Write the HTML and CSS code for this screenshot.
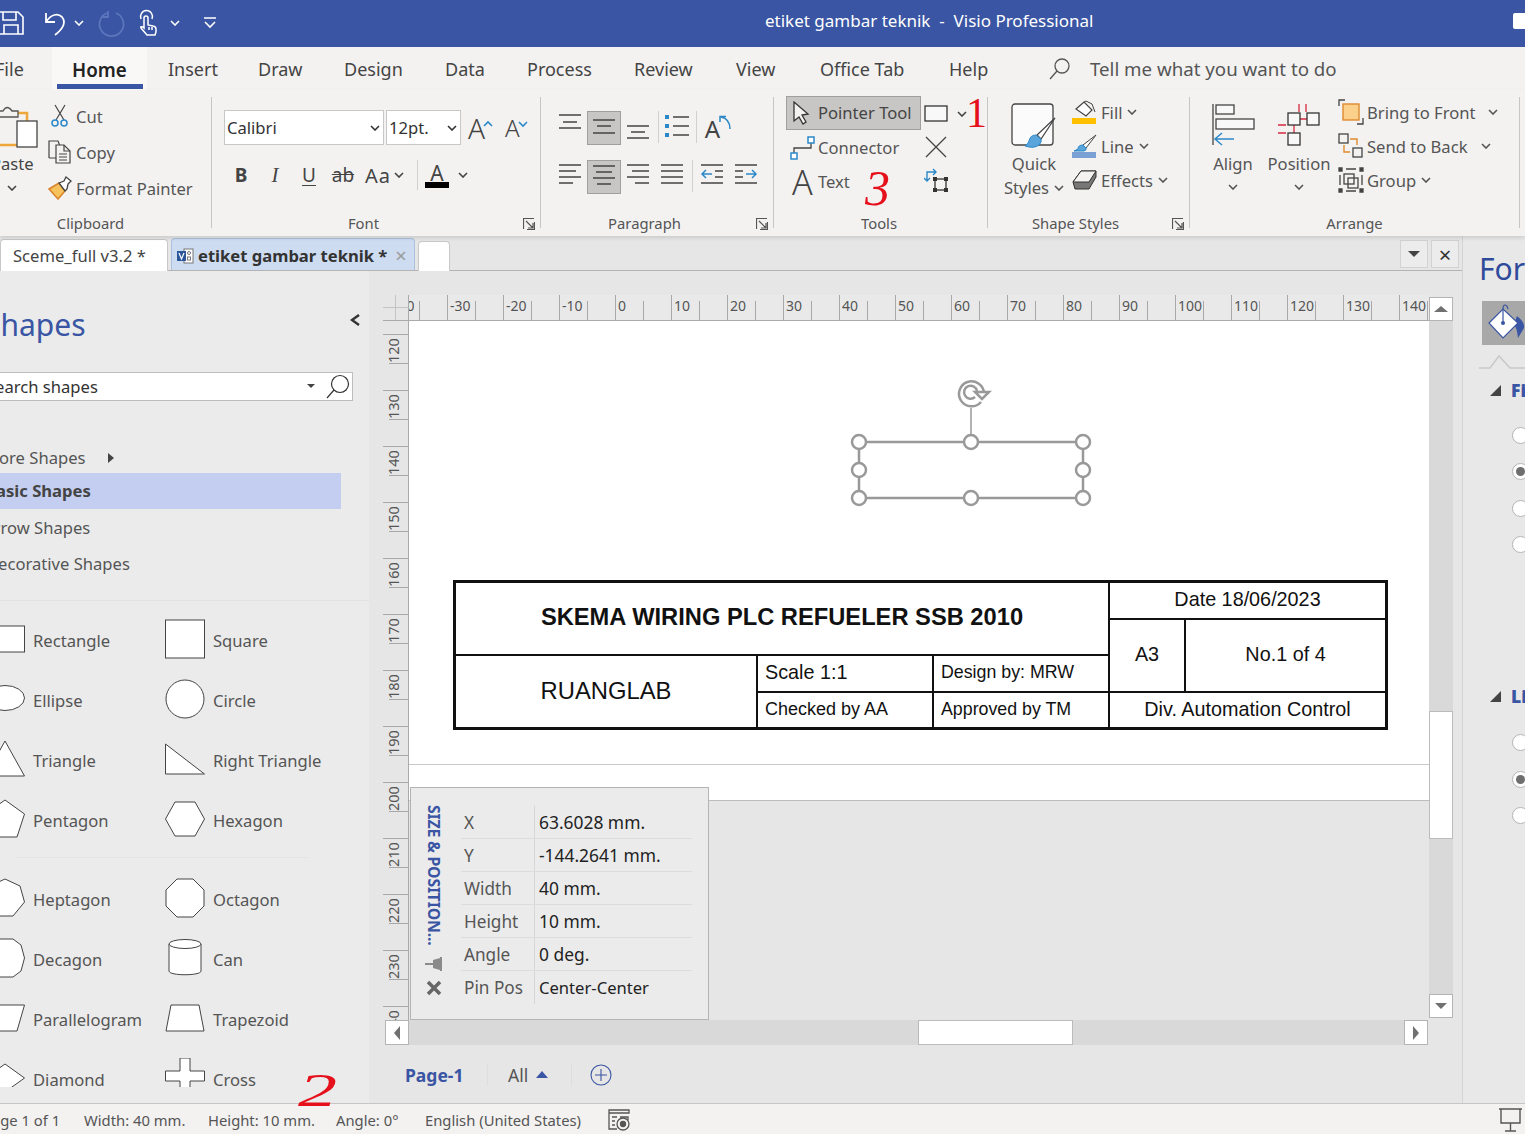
FILE: index.html
```html
<!DOCTYPE html>
<html lang="en">
<head>
  <meta charset="UTF-8">
  <title>etiket gambar teknik - Visio Professional</title>
  <link rel="stylesheet" href="styles.css">
</head>
<body>
<svg class="defs" width="0" height="0">
  <symbol id="chev" viewBox="0 0 10 6"><path d="M1 1l4 4 4-4" fill="none" stroke="currentColor" stroke-width="1.6"/></symbol>
  <symbol id="launch" viewBox="0 0 12 12"><path d="M.5 11V.5H11M3 3l7 7M10 5v5H5M11.5 4v7.5H4" fill="none" stroke="#555" stroke-width="1.2"/></symbol>
</svg>

<div class="app">
  <!-- title bar -->
  <header class="titlebar">
    <div class="qat">
      <svg class="q-save" width="24" height="24" viewBox="0 0 24 24" fill="none" stroke="#fff" stroke-width="1.6"><path d="M-6 1H18l5 5v17H-6zM3 1v8h13V1M4 23v-9h14v9"/></svg>
      <svg class="q-undo" width="24" height="26" viewBox="0 0 24 26" fill="none" stroke="#fff" stroke-width="1.8"><path d="M2 3v9h9M2 12C7 4 14 3 18 7c4 5 2 11-7 18"/></svg>
      <svg class="q-chev" width="10" height="6"><use href="#chev"/></svg>
      <svg class="q-redo" width="26" height="26" viewBox="0 0 26 26" fill="none" stroke="#5b76bd" stroke-width="1.8"><path d="M8 3a12 12 0 1 0 9 0M9 1v6H3"/></svg>
      <svg class="q-touch" width="20" height="26" viewBox="0 0 20 26" fill="none" stroke="#fff" stroke-width="1.5"><path d="M2 9a6 6 0 1 1 11 0M5 8a2 2 0 0 1 4 0v7l5 1q3 .5 3 3v3l-1 3H8l-6-7q-1-2 2-1l1 1zM10 17v3M13 17v3"/></svg>
      <svg class="q-chev2" width="10" height="6"><use href="#chev"/></svg>
      <svg class="q-more" width="14" height="12" viewBox="0 0 14 12" fill="none" stroke="#fff" stroke-width="1.6"><path d="M1 1h12M2 5l5 5 5-5"/></svg>
    </div>
    <div class="doc-title">etiket gambar teknik  -  Visio Professional</div>
    <div class="title-end"></div>
  </header>

  <!-- ribbon tabs -->
  <nav class="tabs">
    <span class="tab tab-file">File</span>
    <span class="tab tab-home">Home</span>
    <span class="tab tab-insert">Insert</span>
    <span class="tab tab-draw">Draw</span>
    <span class="tab tab-design">Design</span>
    <span class="tab tab-data">Data</span>
    <span class="tab tab-process">Process</span>
    <span class="tab tab-review">Review</span>
    <span class="tab tab-view">View</span>
    <span class="tab tab-office">Office Tab</span>
    <span class="tab tab-help">Help</span>
    <svg class="tell-icon" width="22" height="24" viewBox="0 0 22 24" fill="none" stroke="#555" stroke-width="1.3"><circle cx="13" cy="9" r="7"/><path d="M8 14L1 22"/></svg>
    <span class="tell">Tell me what you want to do</span>
  </nav>

  <!-- ribbon -->
  <section class="ribbon">
    <div class="group g-clip">
      <div class="body clip-body">
        <div class="paste">
          <svg class="paste-ic" width="38" height="46" viewBox="0 0 38 46"><rect x="-6" y="10" width="33" height="32" fill="#f3f2f1" stroke="#eda73a" stroke-width="2.5"/><path d="M-2 14V8h5q4-7 9 0h6v6z" fill="#f3f2f1" stroke="#555" stroke-width="1.3"/><rect x="17" y="18" width="20" height="26" fill="#fff" stroke="#444" stroke-width="1.3"/></svg>
          <span class="paste-txt">Paste</span>
          <svg class="paste-chev" width="10" height="6"><use href="#chev"/></svg>
        </div>
        <div class="stack">
          <div class="small"><svg class="sic" width="24" height="24" viewBox="0 0 24 24" fill="none"><path d="M7 1l9 15M17 1L8 16" stroke="#444" stroke-width="1.2"/><circle cx="7" cy="19" r="3" stroke="#2b88c8" stroke-width="1.5"/><circle cx="16" cy="19" r="3" stroke="#2b88c8" stroke-width="1.5"/></svg>Cut</div>
          <div class="small"><svg class="sic" width="24" height="24" viewBox="0 0 24 24" fill="#f3f2f1" stroke="#444" stroke-width="1.2"><path d="M1 18V1h9l2 5M1 18h8"/><path d="M8 5h8l6 6v12H8z"/><path d="M16 5v6h6M11 14h8M11 17h8M11 20h8" fill="none"/></svg>Copy</div>
          <div class="small"><svg class="sic" width="24" height="24" viewBox="0 0 24 24"><path d="M1 13l10-6 6 8-7 8z" fill="#f6c25b" stroke="#d9822b" stroke-width="1.5"/><path d="M11 7l5-2 2-4 5 4-3 3-1 5-2 2z" fill="#fff" stroke="#444" stroke-width="1.3"/></svg>Format Painter</div>
        </div>
      </div>
      <div class="label">Clipboard</div>
    </div>
    <div class="sep"></div>

    <div class="group g-font">
      <div class="body font-body">
        <div class="font-row">
          <div class="combo combo-font">Calibri<svg width="10" height="6"><use href="#chev"/></svg></div>
          <div class="combo combo-size">12pt.<svg width="10" height="6"><use href="#chev"/></svg></div>
          <span class="grow">A<svg width="10" height="8" viewBox="0 0 10 8" fill="none" stroke="#2b88c8" stroke-width="1.6"><path d="M1 6l4-4 4 4"/></svg></span>
          <span class="grow shrink">A<svg width="10" height="8" viewBox="0 0 10 8" fill="none" stroke="#2b88c8" stroke-width="1.6"><path d="M1 2l4 4 4-4"/></svg></span>
        </div>
        <div class="font-row2">
          <span class="fb bold">B</span>
          <span class="fb ital">I</span>
          <span class="fb under">U</span>
          <span class="fb strike">ab</span>
          <span class="fb case">Aa<svg width="10" height="6"><use href="#chev"/></svg></span>
          <span class="vsep vsep-font"></span>
          <span class="color-a">A</span>
          <svg class="color-chev" width="10" height="6"><use href="#chev"/></svg>
        </div>
      </div>
      <div class="label">Font</div>
      <svg class="launcher" width="12" height="12"><use href="#launch"/></svg>
    </div>
    <div class="sep"></div>

    <div class="group g-para">
      <div class="body para-body">
        <div class="para-row">
          <span class="pb"><svg width="34" height="32" viewBox="0 0 34 32" class="lines"><path d="M6 4h22M10 11h14M6 17h22"/></svg></span>
          <span class="pb on"><svg width="32" height="32" viewBox="0 0 32 32" class="lines"><path d="M5 8h22M9 14h14M5 21h22"/></svg></span>
          <span class="pb"><svg width="34" height="32" viewBox="0 0 34 32" class="lines"><path d="M6 15h22M10 21h14M6 27h22"/></svg></span>
          <span class="vsep vsep-a"></span>
          <span class="pb"><svg width="34" height="32" viewBox="0 0 34 32" class="lines"><path d="M6 4h4v4H6zM6 13h4v4H6zM6 22h4v4H6z" fill="#2b88c8" stroke="none"/><path d="M14 6h16M14 15h16M14 24h16"/></svg></span>
          <span class="vsep vsep-b"></span>
          <span class="pb pb-dir">A<svg width="13" height="15" viewBox="0 0 13 15" fill="none" stroke="#2b88c8" stroke-width="1.5"><path d="M12 14C12 7 8 3 3 2M2 7V1.5h6"/></svg></span>
        </div>
        <div class="para-row para-row2">
          <span class="pb"><svg width="34" height="32" viewBox="0 0 34 32" class="lines"><path d="M6 5h22M6 11h17M6 17h22M6 23h14"/></svg></span>
          <span class="pb on"><svg width="32" height="32" viewBox="0 0 32 32" class="lines"><path d="M5 5h22M8 11h16M5 17h22M9 23h14"/></svg></span>
          <span class="pb"><svg width="34" height="32" viewBox="0 0 34 32" class="lines"><path d="M6 5h22M11 11h17M6 17h22M14 23h14"/></svg></span>
          <span class="pb"><svg width="34" height="32" viewBox="0 0 34 32" class="lines"><path d="M6 5h22M6 11h22M6 17h22M6 23h22"/></svg></span>
          <span class="vsep vsep-c"></span>
          <span class="pb"><svg width="34" height="32" viewBox="0 0 34 32" class="lines"><path d="M6 5h22M20 11h8M20 17h8M6 23h22"/><path d="M17 14H7M11 10l-4 4 4 4" stroke="#2b88c8"/></svg></span>
          <span class="pb"><svg width="34" height="32" viewBox="0 0 34 32" class="lines"><path d="M6 5h22M6 11h8M6 17h8M6 23h22"/><path d="M17 14h10M23 10l4 4-4 4" stroke="#2b88c8"/></svg></span>
        </div>
      </div>
      <div class="label">Paragraph</div>
      <svg class="launcher" width="12" height="12"><use href="#launch"/></svg>
    </div>
    <div class="sep"></div>

    <div class="group g-tools">
      <div class="body tools-body">
        <div class="tools-col">
          <div class="tool tool-on"><svg width="17" height="24" viewBox="0 0 17 24"><path d="M1 1v19l5-4 4 7 3-2-4-7 6-1z" fill="#f3f2f1" stroke="#333" stroke-width="1.3"/></svg>Pointer Tool</div>
          <div class="tool tool-conn"><svg width="26" height="24" viewBox="0 0 26 24" fill="none"><path d="M4 17v-5h17V6" stroke="#444" stroke-width="1.3"/><rect x="1" y="17" width="6" height="6" fill="#fff" stroke="#2b88c8" stroke-width="1.5"/><rect x="18" y="1" width="6" height="6" fill="#fff" stroke="#2b88c8" stroke-width="1.5"/></svg>Connector</div>
          <div class="tool tool-text"><span class="big-a">A</span>Text</div>
        </div>
        <div class="tools-col2">
          <div class="tic"><svg width="24" height="18" viewBox="0 0 24 18"><rect x="1" y="1" width="22" height="15" fill="#f8f8f8" stroke="#333" stroke-width="1.3"/></svg><svg class="tic-chev" width="10" height="6"><use href="#chev"/></svg></div>
          <div class="tic tic-x"><svg width="24" height="22" viewBox="0 0 24 22" fill="none" stroke="#444" stroke-width="1.3"><path d="M2 1l20 20M22 1L2 21"/></svg></div>
          <div class="tic tic-crop"><svg width="24" height="24" viewBox="0 0 24 24" fill="none"><rect x="11" y="11" width="11" height="11" stroke="#333" stroke-width="1.3"/><path d="M9 9h4v4H9zM20 9h4v4h-4zM9 20h4v4H9zM20 20h4v4h-4z" fill="#333"/><path d="M3 13V4h9M9 1l3 3-3 3M0 10l3 3 3-3" stroke="#2b88c8" stroke-width="1.4"/></svg></div>
        </div>
      </div>
      <div class="label">Tools</div>
    </div>
    <div class="sep"></div>

    <div class="group g-styles">
      <div class="body styles-body">
        <div class="big big-quick">
          <svg width="46" height="46" viewBox="0 0 46 46"><rect x="1" y="1" width="41" height="41" rx="3" fill="#fbfbfb" stroke="#444" stroke-width="1.3"/><path d="M44 15L26 32l4 4z" fill="#fff" stroke="#444" stroke-width="1.2"/><path d="M25 32q-6 0-7 6-1 3-4 5 9 3 14-1 3-3 2-6z" fill="#5aa5dc" stroke="#2b88c8"/></svg>
          <span class="big-txt">Quick</span>
          <span class="big-txt quick-2">Styles<svg width="10" height="6"><use href="#chev"/></svg></span>
        </div>
        <div class="stack stack-mid">
          <div class="small mid"><svg class="sic" width="26" height="24" viewBox="0 0 26 24"><path d="M4 9l8-7 8 8-6 6z" fill="#fff" stroke="#444" stroke-width="1.2"/><path d="M12 2l2-1 6 3 3 8" fill="none" stroke="#444"/><rect y="18" width="24" height="6" fill="#ffc000"/></svg>Fill<svg class="ch" width="10" height="6"><use href="#chev"/></svg></div>
          <div class="small mid"><svg class="sic" width="26" height="24" viewBox="0 0 26 24"><path d="M24 1L11 11l3 3z" fill="#fff" stroke="#444"/><path d="M11 11q-5 0-5 4l-4 2h10q3-1 2-3z" fill="#5aa5dc" stroke="#2b88c8"/><rect y="18" width="24" height="6" fill="#7ba1d4"/></svg>Line<svg class="ch" width="10" height="6"><use href="#chev"/></svg></div>
          <div class="small mid"><svg class="sic" width="26" height="22" viewBox="0 0 26 22"><path d="M1 13L9 2h15v6l-7 12H3z" fill="#777" stroke="#333"/><path d="M1 13L9 2h15l-7 11z" fill="#f3f2f1" stroke="#333"/></svg>Effects<svg class="ch" width="10" height="6"><use href="#chev"/></svg></div>
        </div>
      </div>
      <div class="label">Shape Styles</div>
      <svg class="launcher" width="12" height="12"><use href="#launch"/></svg>
    </div>
    <div class="sep"></div>

    <div class="group g-arrange">
      <div class="body arrange-body">
        <div class="big big-align">
          <svg width="44" height="44" viewBox="0 0 44 44" fill="none" stroke="#444" stroke-width="1.3"><path d="M2 1v41"/><rect x="5" y="2" width="18" height="9" fill="#f8f8f8"/><rect x="5" y="16" width="38" height="10" fill="#f8f8f8"/><path d="M23 36H4M11 30l-7 6 7 6" stroke="#2b88c8" stroke-width="1.5"/></svg>
          <span class="big-txt">Align</span>
          <svg class="big-chev" width="10" height="6"><use href="#chev"/></svg>
        </div>
        <div class="big big-pos">
          <svg width="44" height="44" viewBox="0 0 44 44" fill="none" stroke="#d8293f" stroke-width="1.3"><path d="M22 1v8M29 1v8M1 22h8M1 30h8M23 16h8M17 22v9"/><g stroke="#333"><rect x="11" y="10" width="12" height="12" fill="#f8f8f8"/><rect x="30" y="10" width="12" height="12" fill="#f8f8f8"/><rect x="11" y="30" width="12" height="12" fill="#f8f8f8"/></g></svg>
          <span class="big-txt">Position</span>
          <svg class="big-chev" width="10" height="6"><use href="#chev"/></svg>
        </div>
        <div class="stack stack-arr">
          <div class="small arr"><svg class="sic" width="26" height="26" viewBox="0 0 26 26" fill="none"><path d="M7 1H1v6M19 25h6v-6" stroke="#444" stroke-width="1.3"/><rect x="5" y="5" width="16" height="16" fill="#fad08a" stroke="#e08a2e" stroke-width="1.4"/></svg>Bring to Front<svg class="ch ch-front" width="10" height="6"><use href="#chev"/></svg></div>
          <div class="small arr"><svg class="sic" width="26" height="26" viewBox="0 0 26 26" fill="none"><path d="M12 6h7v6M6 12v7h6" stroke="#e08a2e" stroke-width="1.4"/><rect x="1" y="1" width="9" height="9" stroke="#444" stroke-width="1.3"/><rect x="15" y="15" width="9" height="9" stroke="#444" stroke-width="1.3"/></svg>Send to Back<svg class="ch ch-front" width="10" height="6"><use href="#chev"/></svg></div>
          <div class="small arr"><svg class="sic" width="26" height="26" viewBox="0 0 26 26" fill="none" stroke="#444" stroke-width="1.3"><path d="M1 1h3v3H1zM22 1h3v3h-3zM1 22h3v3H1zM22 22h3v3h-3z" fill="#444"/><path d="M8 2h10M8 24h10M2 8v10M24 8v10"/><rect x="6" y="7" width="10" height="10"/><rect x="10" y="11" width="10" height="10"/></svg>Group<svg class="ch" width="10" height="6"><use href="#chev"/></svg></div>
        </div>
      </div>
      <div class="label">Arrange</div>
    </div>
    <div class="sep"></div>
  </section>

  <!-- workspace -->
  <div class="workspace">
    <div class="work-main">
      <div class="docstrip">
        <div class="doctab doctab-a">Sceme_full v3.2 *</div>
        <div class="doctab doctab-b">
          <svg width="17" height="16" viewBox="0 0 17 16"><rect x="7" y="1" width="9" height="14" fill="#fff" stroke="#777"/><rect x="0" y="3" width="9" height="10" fill="#2b579a"/><path d="M2 5l2.5 6L7 5" fill="none" stroke="#fff" stroke-width="1.2"/><circle cx="12" cy="5" r="1.5" fill="none" stroke="#777"/><rect x="10.5" y="9" width="3" height="3" fill="none" stroke="#777"/></svg>
          <b>etiket gambar teknik *</b><span class="doc-x">×</span>
        </div>
        <div class="doctab doctab-c"></div>
        <div class="strip-btns">
          <span class="strip-btn"><i class="caret-d"></i></span>
          <span class="strip-btn strip-x">×</span>
        </div>
      </div>

      <div class="work-row">
        <!-- shapes panel -->
        <aside class="shapes">
          <div class="shapes-head">
            <h2 class="shapes-title">Shapes</h2>
            <svg class="collapse" width="11" height="12" viewBox="0 0 11 12" fill="none" stroke="#333" stroke-width="2.5"><path d="M9 1L2 6l7 5"/></svg>
          </div>
          <div class="search">
            <span class="search-txt">Search shapes</span>
            <i class="caret-d caret-s"></i>
            <svg width="26" height="26" viewBox="0 0 26 26" fill="none" stroke="#333" stroke-width="1.2"><circle cx="15" cy="10" r="8.5"/><path d="M9 16l-7 8"/></svg>
          </div>
          <ul class="cats">
            <li class="cat cat-more"><span>More Shapes</span><i class="caret-r"></i></li>
            <li class="cat cat-basic"><span>Basic Shapes</span></li>
            <li class="cat cat-arrow"><span>Arrow Shapes</span></li>
            <li class="cat cat-deco"><span>Decorative Shapes</span></li>
          </ul>
          <div class="rule"></div>
          <div class="stencil">
            <div class="sh"><svg viewBox="0 0 40 40"><rect x=".5" y="7" width="39" height="26"/></svg>Rectangle</div>
            <div class="sh"><svg viewBox="0 0 40 40"><rect x=".5" y="1" width="39" height="38"/></svg>Square</div>
            <div class="sh"><svg viewBox="0 0 40 40"><ellipse cx="20" cy="19" rx="19.5" ry="12.5"/></svg>Ellipse</div>
            <div class="sh"><svg viewBox="0 0 40 40"><circle cx="20" cy="20" r="19"/></svg>Circle</div>
            <div class="sh"><svg viewBox="0 0 40 40"><path d="M20 2l19.5 35H.5z"/></svg>Triangle</div>
            <div class="sh"><svg viewBox="0 0 40 40"><path d="M.5 5l39 30H.5z"/></svg>Right Triangle</div>
            <div class="sh"><svg viewBox="0 0 40 40"><path d="M20 1l19.5 14L32 38H8L.5 15z"/></svg>Pentagon</div>
            <div class="sh"><svg viewBox="0 0 40 40"><path d="M10 3h20l9.5 17L30 37H10L.5 20z"/></svg>Hexagon</div>
            <div class="sh-rule"></div>
            <div class="sh"><svg viewBox="0 0 40 40"><path d="M20 1l15 7 4.5 16L28 38H12L.5 24 5 8z"/></svg>Heptagon</div>
            <div class="sh"><svg viewBox="0 0 40 40"><path d="M12 1h16l11 11v16L28 39H12L1 28V12z"/></svg>Octagon</div>
            <div class="sh"><svg viewBox="0 0 40 40"><path d="M12 1h16l8 6 3.5 13L36 33l-8 6H12l-8-6L.5 20 4 7z"/></svg>Decagon</div>
            <div class="sh"><svg viewBox="0 0 40 40"><path d="M4 6v27c0 5 32 5 32 0V6"/><ellipse cx="20" cy="6" rx="16" ry="4.5"/></svg>Can</div>
            <div class="sh"><svg viewBox="0 0 40 40"><path d="M8 7h31.5L32 33H.5z"/></svg>Parallelogram</div>
            <div class="sh"><svg viewBox="0 0 40 40"><path d="M6 7h28l5 26H1z"/></svg>Trapezoid</div>
            <div class="sh"><svg viewBox="0 0 40 40"><path d="M20 6l19.5 14L20 34 .5 20z"/></svg>Diamond</div>
            <div class="sh"><svg viewBox="0 0 40 40"><path d="M15 0h10v13h14.5v10H25v17H15V23H.5V13H15z"/></svg>Cross</div>
          </div>
        </aside>

        <!-- drawing area -->
        <main class="stage">
          <div class="corner"></div>
          <div class="hruler">
            <span class="ht">-40</span><span class="ht">-30</span><span class="ht">-20</span><span class="ht">-10</span><span class="ht">0</span><span class="ht">10</span><span class="ht">20</span><span class="ht">30</span><span class="ht">40</span><span class="ht">50</span><span class="ht">60</span><span class="ht">70</span><span class="ht">80</span><span class="ht">90</span><span class="ht">100</span><span class="ht">110</span><span class="ht">120</span><span class="ht">130</span><span class="ht">140</span>
          </div>
          <div class="vscroll">
            <span class="sbtn"><i class="caret-u"></i></span>
            <div class="vtrack"><div class="vthumb"></div></div>
            <span class="sbtn"><i class="caret-d caret-g"></i></span>
          </div>
          <div class="vruler">
            <span class="vt"><b>120</b></span><span class="vt"><b>130</b></span><span class="vt"><b>140</b></span><span class="vt"><b>150</b></span><span class="vt"><b>160</b></span><span class="vt"><b>170</b></span><span class="vt"><b>180</b></span><span class="vt"><b>190</b></span><span class="vt"><b>200</b></span><span class="vt"><b>210</b></span><span class="vt"><b>220</b></span><span class="vt"><b>230</b></span><span class="vt"><b>240</b></span>
          </div>
          <div class="canvas">
            <div class="sheet"></div>

            <svg class="selection" width="250" height="140" viewBox="0 0 250 140" fill="#fff" stroke="#999" stroke-width="2.5">
              <rect x="15" y="67" width="224" height="56" fill="none"/>
              <path d="M127 33v30" stroke-width="1.5" fill="none"/>
              <path d="M137 27a12.5 12.5 0 1 1 3-9M131 22a6.5 6.5 0 1 1 2-6" fill="none"/>
              <path d="M131 17h14l-7 7z" fill="#fff"/>
              <circle cx="15" cy="67" r="7"/><circle cx="127" cy="67" r="7"/><circle cx="239" cy="67" r="7"/>
              <circle cx="15" cy="95" r="7"/><circle cx="239" cy="95" r="7"/>
              <circle cx="15" cy="123" r="7"/><circle cx="127" cy="123" r="7"/><circle cx="239" cy="123" r="7"/>
            </svg>

            <div class="titleblock">
              <div class="tb tb-title">SKEMA WIRING PLC REFUELER SSB 2010</div>
              <div class="tb tb-date">Date 18/06/2023</div>
              <div class="tb tb-a3">A3</div>
              <div class="tb tb-no">No.1 of 4</div>
              <div class="tb tb-lab">RUANGLAB</div>
              <div class="tb tb-scale">Scale 1:1</div>
              <div class="tb tb-design">Design by: MRW</div>
              <div class="tb tb-check">Checked by AA</div>
              <div class="tb tb-appr">Approved by TM</div>
              <div class="tb tb-div">Div. Automation Control</div>
            </div>

            <div class="sizepos">
              <div class="sp-side">
                <span class="sp-title">SIZE &amp; POSITION...</span>
                <svg width="18" height="14" viewBox="0 0 18 14" fill="#8a8a8a"><path d="M0 6h8v2H0zM8 3l7-2v12l-7-2zM15 0h2v14h-2z"/></svg>
                <svg width="16" height="16" viewBox="0 0 16 16" stroke="#666" stroke-width="3.5"><path d="M2 2l12 12M14 2L2 14"/></svg>
              </div>
              <div class="sp-table">
                <div class="sp-row"><span>X</span><em>63.6028 mm.</em></div>
                <div class="sp-row"><span>Y</span><em>-144.2641 mm.</em></div>
                <div class="sp-row"><span>Width</span><em>40 mm.</em></div>
                <div class="sp-row"><span>Height</span><em>10 mm.</em></div>
                <div class="sp-row"><span>Angle</span><em>0 deg.</em></div>
                <div class="sp-row"><span>Pin Pos</span><em>Center-Center</em></div>
              </div>
            </div>
          </div>
          <div class="hscroll">
            <span class="sbtn"><i class="caret-l"></i></span>
            <div class="htrack"><div class="hthumb"></div></div>
            <span class="sbtn"><i class="caret-r caret-g"></i></span>
          </div>
          <div class="pagebar">
            <span class="page-name">Page-1</span>
            <span class="page-sep"></span>
            <span class="page-all">All</span><i class="caret-blue"></i>
            <span class="page-sep page-sep2"></span>
            <svg width="22" height="22" viewBox="0 0 22 22" fill="none" stroke="#3955a3" stroke-width="1.1"><circle cx="11" cy="11" r="10"/><path d="M11 5v12M5 11h12"/></svg>
          </div>
        </main>
      </div>
    </div>

    <!-- format shape pane -->
    <aside class="format">
      <div class="format-title">Format Shape</div>
      <div class="format-icon"><svg width="44" height="44" viewBox="0 0 44 44"><path d="M35 15q8 6 7 12l-6 10q-1-10-4-14z" fill="#3955a3"/><path d="M7 22L21 8l15 14-15 15z" fill="#fff" stroke="#3955a3" stroke-width="1.2"/><path d="M21 21V8q0-4 2-4t3 4" fill="none" stroke="#3955a3" stroke-width="1.2"/><circle cx="21" cy="22" r="2" fill="#3955a3"/></svg></div>
      <svg class="format-notch" width="46" height="14" viewBox="0 0 46 14" fill="none" stroke="#c8c8c8" stroke-width="1.5"><path d="M0 13h11l9-12 11 12h15"/></svg>
      <div class="sect sect-fill"><i class="tri"></i><b>Fill</b></div>
      <div class="radios radios-fill">
        <span class="radio"></span><span class="radio radio-on"></span><span class="radio"></span><span class="radio"></span>
      </div>
      <div class="sect sect-line"><i class="tri"></i><b>Line</b></div>
      <div class="radios radios-line">
        <span class="radio"></span><span class="radio radio-on"></span><span class="radio"></span>
      </div>
    </aside>
  </div>

  <!-- status bar -->
  <footer class="status">
    <span class="st st-page">Page 1 of 1</span>
    <span class="st st-w">Width: 40 mm.</span>
    <span class="st st-h">Height: 10 mm.</span>
    <span class="st st-a">Angle: 0°</span>
    <span class="st st-l">English (United States)</span>
    <svg width="22" height="22" viewBox="0 0 22 22" fill="none" stroke="#555" stroke-width="1.3"><path d="M1 1h20v3H1zM1 4v16h8M4 8h5M4 12h3M4 16h3M12 8h8v3"/><circle cx="15" cy="15" r="6"/><circle cx="15" cy="15" r="2.5" fill="#555"/></svg>
    <svg class="st-present" width="24" height="24" viewBox="0 0 24 24" fill="none" stroke="#555" stroke-width="1.4"><path d="M0 1h23M2 1v14h19V1M11.5 15v8M6 23h11"/></svg>
  </footer>

  <!-- red pen marks on top of the screenshot -->
  <span class="ink ink-1">1</span>
  <span class="ink ink-2">2</span>
  <span class="ink ink-3">3</span>
</div>
</body>
</html>
```

FILE: styles.css
```css
* {
  box-sizing: border-box;
}

html, body {
  margin: 0;
  padding: 0;
}

body {
  font-family: "Noto Sans", "Open Sans", sans-serif;
  font-size: 16.6px;
  color: #444;
  background: #e6e6e6;
  overflow: hidden;
}

.defs {
  position: absolute;
}

.app {
  position: relative;
  width: 1525px;
  height: 1134px;
  overflow: hidden;
  display: flex;
  flex-direction: column;
}

/* title bar */
.titlebar {
  height: 47px;
  background: #3955a3;
  display: flex;
  align-items: center;
  color: #fff;
  flex: none;
}

.qat {
  display: flex;
  align-items: center;
  width: 765px;
  flex: none;
  margin-top: -2px;
}

.qat svg {
  overflow: visible;
  flex: none;
}

.q-undo { margin-left: 20px; }
.q-chev { margin-left: 6px; }
.q-redo { margin-left: 15px; }
.q-touch { margin-left: 14px; }
.q-chev2 { margin-left: 11px; }
.q-more { margin-left: 23px; }

.doc-title {
  white-space: pre;
  font-size: 17px;
  margin-top: -7px;
}

.title-end {
  margin-left: auto;
  width: 12px;
  height: 16px;
  background: #fff;
  border-radius: 2px 0 0 2px;
  margin-top: -6px;
}

/* tabs */
.tabs {
  height: 43px;
  background: #f3f2f1;
  display: flex;
  align-items: center;
  flex: none;
  color: #444;
  white-space: nowrap;
  font-size: 18px;
}

.tab {
  display: block;
}

.tab-file { margin-left: -5px; width: 57px; }
.tab-home {
  width: 95px;
  margin-right: 21px;
  padding-left: 20px;
  font-weight: 600;
  font-size: 18.8px;
  color: #222;
  position: relative;
  height: 43px;
  line-height: 47px;
  background: #f9f8f7;
}
.tab-home::after {
  content: "";
  position: absolute;
  left: 5px;
  right: 4px;
  bottom: 1px;
  height: 5px;
  background: #3955a3;
}
.tab-insert { width: 90px; }
.tab-draw { width: 86px; }
.tab-design { width: 101px; }
.tab-data { width: 82px; }
.tab-process { width: 107px; }
.tab-review { width: 102px; }
.tab-view { width: 84px; }
.tab-office { width: 129px; }
.tab-help { width: 100px; }

.tell-icon { flex: none; }

.tell {
  margin-left: 19px;
  font-size: 18.7px;
  color: #555;
}

/* ribbon */
.ribbon {
  height: 146px;
  background: #f3f2f1;
  display: flex;
  flex: none;
  box-shadow: 0 2px 4px rgba(0, 0, 0, .12);
  position: relative;
  z-index: 2;
  white-space: nowrap;
}

.group {
  position: relative;
  display: flex;
  flex-direction: column;
  flex: none;
  padding-top: 7px;
}

.g-clip { width: 211px; }
.g-font { width: 328px; }
.g-para { width: 232px; }
.g-tools { width: 213px; }
.g-styles { width: 201px; }
.g-arrange { width: 329px; }

.sep {
  width: 1px;
  margin: 7px 0 8px;
  background: #c8c6c4;
  flex: none;
}

.body {
  height: 115px;
  display: flex;
}

.label {
  height: 24px;
  line-height: 22px;
  text-align: center;
  font-size: 14.8px;
  color: #555;
}

.g-clip .label { padding-right: 30px; }
.g-font .label { padding-right: 25px; }
.g-para .label { padding-right: 25px; }
.g-tools .label { padding-right: 3px; }
.g-styles .label { padding-right: 26px; }

.launcher {
  position: absolute;
  right: 5px;
  bottom: 6px;
}

.stack {
  display: flex;
  flex-direction: column;
}

.small {
  height: 36px;
  display: flex;
  align-items: center;
  color: #555;
}

.sic {
  flex: none;
  margin-right: 4px;
}

.ch {
  margin-left: 5px;
}

/* clipboard */
.paste {
  width: 48px;
  display: flex;
  flex-direction: column;
  flex: none;
}

.paste-ic {
  margin-top: 6px;
  overflow: hidden;
}

.paste-txt {
  margin-left: -9px;
  margin-top: 3px;
  line-height: 24px;
  color: #444;
}

.paste-chev {
  margin: 9px 0 0 7px;
}

.clip-body .stack {
  margin-top: 1px;
}

/* font */
.font-body {
  flex-direction: column;
  padding: 13px 0 0 12px;
}

.font-row {
  display: flex;
  gap: 2px;
  align-items: center;
}

.combo {
  height: 35px;
  background: #fff;
  border: 1px solid #c8c8c8;
  display: flex;
  align-items: center;
  justify-content: space-between;
  padding: 0 3px 0 2px;
  color: #333;
}

.combo-font { width: 160px; }
.combo-size { width: 75px; }

.grow {
  display: flex;
  align-items: flex-start;
  font-size: 28px;
  font-weight: 300;
  line-height: 30px;
  width: 37px;
  padding-left: 5px;
  color: #444;
}

.grow svg {
  margin: 7px 0 0 -2px;
}

.shrink {
  font-size: 24px;
  padding-left: 3px;
}

.font-row2 {
  display: flex;
  align-items: center;
  height: 32px;
  margin-top: 14px;
}

.fb {
  width: 34px;
  text-align: center;
  color: #444;
  font-size: 19px;
  flex: none;
}

.bold { font-weight: 700; }
.ital { font-family: "Liberation Serif", serif; font-style: italic; font-size: 21px; }
.under { text-decoration: underline; text-underline-offset: 3px; }
.strike { text-decoration: line-through; }

.case {
  display: flex;
  align-items: center;
  justify-content: flex-start;
  width: 48px;
  padding-left: 5px;
  letter-spacing: 1px;
  font-size: 20px;
}

.case svg {
  margin-left: 3px;
}

.vsep {
  width: 1px;
  background: #d2d0ce;
  flex: none;
}

.vsep-font {
  height: 30px;
  margin: 0 7px 0 9px;
}

.color-a {
  width: 24px;
  height: 26px;
  line-height: 22px;
  text-align: center;
  font-size: 21px;
  border-bottom: 6px solid #000;
  color: #444;
}

.color-chev {
  margin-left: 9px;
}

/* paragraph */
.para-body {
  flex-direction: column;
  padding: 14px 0 0 12px;
}

.para-row {
  display: flex;
  height: 34px;
}

.para-row2 {
  margin-top: 15px;
}

.pb {
  width: 34px;
  height: 34px;
  flex: none;
  display: flex;
  align-items: flex-start;
  justify-content: center;
}

.pb.on {
  background: #c8c6c4;
  border: 1px solid #a19f9d;
}

.lines {
  fill: none;
  stroke: #444;
  stroke-width: 1.5;
  flex: none;
}

.vsep-a { height: 32px; margin: 0 0 0 3px; }
.vsep-b { height: 32px; margin: 0 3px 0 3px; }
.vsep-c { height: 32px; margin: 0 2px 0 3px; }

.pb-dir {
  font-size: 24px;
  line-height: 36px;
  width: 36px;
}

.pb-dir svg {
  margin: 4px 0 0 -2px;
  flex: none;
}

/* tools */
.tools-body {
  padding-left: 12px;
}

.tools-col {
  width: 135px;
  flex: none;
  margin-top: -1px;
}

.tool {
  height: 34px;
  display: flex;
  align-items: center;
  gap: 8px;
  padding: 0 0 1px 6px;
  color: #555;
}

.tool-on {
  background: #c8c6c4;
  border: 1px solid #a19f9d;
  color: #444;
  margin-bottom: 1px;
}

.tool-conn {
  padding-left: 4px;
  gap: 2px;
}

.tool-text {
  margin-top: 1px;
  gap: 3px;
  padding-bottom: 3px;
}

.big-a {
  font-size: 34px;
  font-weight: 300;
  width: 23px;
  line-height: 34px;
  color: #444;
}

.tools-col2 {
  margin-left: 3px;
}

.tic {
  height: 34px;
  display: flex;
  align-items: center;
}

.tic-chev {
  margin-left: 9px;
}

.tic-x svg {
  margin-top: -2px;
}

.tic-crop svg {
  margin-top: -4px;
}

/* shape styles */
.styles-body {
  padding-left: 14px;
}

.big {
  display: flex;
  flex-direction: column;
  align-items: center;
  flex: none;
  padding-top: 6px;
  color: #555;
}

.big-txt {
  line-height: 24px;
}

.big-quick {
  width: 64px;
}

.big-quick > svg:first-child {
  margin-bottom: 3px;
}

.big-align > svg:first-child,
.big-pos > svg:first-child {
  margin-bottom: 5px;
}

.quick-2 {
  display: flex;
  align-items: center;
  gap: 5px;
}

.stack-mid {
  margin-left: 6px;
  margin-top: -2px;
}

.mid {
  height: 34px;
}

.mid .sic,
.arr .sic {
  margin-right: 3px;
}

/* arrange */
.arrange-body {
  padding-left: 11px;
}

.big-align {
  width: 64px;
}

.big-pos {
  width: 68px;
}

.big-chev {
  margin-top: 8px;
}

.stack-arr {
  margin-left: 5px;
  margin-top: -2px;
}

.arr {
  height: 34px;
}

.ch-front { margin-left: 13px; }

/* workspace */
.workspace {
  flex: 1;
  display: flex;
  min-height: 0;
}

.work-main {
  width: 1462px;
  flex: none;
  display: flex;
  flex-direction: column;
}

.docstrip {
  height: 35px;
  flex: none;
  display: flex;
  align-items: flex-end;
  gap: 3px;
  border-bottom: 1px solid #b4b4b4;
  background: #e6e6e6;
  position: relative;
  white-space: nowrap;
}

.doctab {
  height: 32px;
  display: flex;
  align-items: center;
  background: #fff;
  border: 1px solid #c8c8c8;
  border-bottom: 0;
  border-radius: 4px 4px 0 0;
  color: #444;
}

.doctab-a {
  width: 168px;
  padding-left: 12px;
  margin-bottom: -1px;
}

.doctab-b {
  width: 244px;
  background: #cddcf0;
  border-color: #aac0dc;
  padding: 2px 0 0 5px;
  gap: 4px;
  color: #333;
}

.doc-x {
  margin-left: 4px;
  color: #9a9a9a;
  font-size: 20px;
}

.doctab-c {
  width: 32px;
  height: 30px;
  margin-bottom: -1px;
}

.strip-btns {
  margin-left: auto;
  display: flex;
  gap: 3px;
  margin-right: 3px;
  margin-bottom: 2px;
}

.strip-btn {
  width: 28px;
  height: 28px;
  border: 1px solid #d2d2d2;
  display: flex;
  align-items: center;
  justify-content: center;
  background: #ececec;
}

.strip-x {
  font-size: 22px;
  color: #333;
}

.work-row {
  flex: 1;
  display: flex;
  min-height: 0;
}

/* shapes panel */
.shapes {
  width: 369px;
  flex: none;
  background: #ebebeb;
  display: flex;
  flex-direction: column;
  color: #555;
}

.shapes-head {
  height: 40px;
  margin-top: 33px;
  display: flex;
  align-items: center;
  justify-content: space-between;
  padding-right: 8px;
}

.shapes-title {
  margin: 0 0 0 -16px;
  font-size: 30px;
  font-weight: 400;
  color: #3955a3;
}

.collapse {
  margin-top: -8px;
}

.search {
  margin-top: 28px;
  width: 353px;
  height: 29px;
  background: #fff;
  border: 1px solid #bdbdbd;
  border-left: 0;
  display: flex;
  align-items: center;
  color: #333;
  padding-right: 1px;
}

.search-txt {
  margin-left: -14px;
  flex: 1;
}

.caret-s {
  margin-right: 10px;
}

.cats {
  list-style: none;
  margin: 36px 0 0;
  padding: 0;
}

.cat {
  height: 36px;
  line-height: 36px;
  width: 341px;
  display: flex;
  align-items: center;
}

.cat-more { margin-left: -16px; padding-top: 6px; }
.cat-more i { margin-left: 23px; }
.cat-basic {
  background: #c3cef0;
  font-weight: 700;
  color: #444;
}
.cat-basic span { margin-left: -15px; }
.cat-arrow { margin-top: 1px; }
.cat-arrow span { margin-left: -17px; }
.cat-deco span { margin-left: -14px; }

.rule {
  height: 1px;
  background: #e2e2e2;
  margin-top: 18px;
}

.stencil {
  margin-top: 10px;
  height: 476px;
  overflow: hidden;
  display: grid;
  grid-template-columns: 180px 1fr;
  grid-template-rows: repeat(4, 60px) 19px repeat(4, 60px);
  margin-left: -15px;
}

.sh {
  display: flex;
  align-items: center;
  gap: 8px;
  padding-bottom: 2px;
  white-space: nowrap;
}

.sh svg {
  width: 40px;
  height: 40px;
  flex: none;
  margin-top: -2px;
  fill: #fff;
  stroke: #444;
  stroke-width: 1;
}

.sh-rule {
  grid-column: 1 / 3;
  height: 19px;
  margin: 0 60px 0 30px;
  border-bottom: 1px solid #e4e4e4;
  transform: translateY(-12px);
}

/* drawing area */
.stage {
  width: 1093px;
  flex: none;
  padding: 24px 0 0 14px;
  display: grid;
  grid-template-columns: 26px 1020px 24px;
  grid-template-rows: 26px 699px 25px 58px;
  background: #e6e6e6;
}

.corner {
  background:
    linear-gradient(#c4c4c4, #c4c4c4) center / 100% 1px no-repeat,
    linear-gradient(#c4c4c4, #c4c4c4) center / 1px 100% no-repeat,
    #e6e6e6;
  border-bottom: 1px solid #aaa;
  border-right: 1px solid #aaa;
}

.hruler {
  display: flex;
  overflow: hidden;
  border-bottom: 1px solid #aaa;
  background: #e9e9e9;
}

.ht {
  width: 56px;
  flex: none;
  height: 25px;
  border-left: 1px solid #a8a8a8;
  position: relative;
  font-size: 14px;
  line-height: 21px;
  padding-left: 2px;
  color: #555;
  white-space: nowrap;
}

.ht:first-child {
  margin-left: -18px;
}

.ht::after {
  content: "";
  position: absolute;
  left: 27px;
  top: 6px;
  bottom: 0;
  width: 1px;
  background: #a8a8a8;
}

.vscroll {
  grid-column: 3;
  grid-row: 1 / 3;
  display: flex;
  flex-direction: column;
  padding-top: 2px;
}

.sbtn {
  width: 24px;
  height: 24px;
  flex: none;
  background: #fff;
  border: 1px solid #b4b4b4;
  display: flex;
  align-items: center;
  justify-content: center;
}

.vtrack {
  flex: 1;
  background: #d9d9d9;
  padding-top: 390px;
}

.vthumb {
  height: 128px;
  background: #fff;
  border: 1px solid #bbb;
}

.vscroll .sbtn:last-child {
  margin-bottom: 2px;
}

.vruler {
  overflow: hidden;
  background: #e6e6e6;
  border-right: 1px solid #aaa;
  padding-top: 13px;
}

.vt {
  display: block;
  height: 56px;
  border-top: 1px solid #a8a8a8;
  position: relative;
}

.vt::after {
  content: "";
  position: absolute;
  left: 6px;
  right: 0;
  top: 28px;
  height: 1px;
  background: #a8a8a8;
}

.vt b {
  display: block;
  width: 20px;
  height: 28px;
  writing-mode: vertical-rl;
  transform: rotate(180deg);
  font-weight: 400;
  font-size: 14.5px;
  line-height: 20px;
  text-align: left;
  color: #555;
  white-space: nowrap;
}

.canvas {
  position: relative;
  background: #e6e6e6;
}

.sheet {
  height: 480px;
  background: #fff;
  border-bottom: 1px solid #bdbdbd;
}

.sheet::after {
  content: "";
  display: block;
  height: 1px;
  background: #c8c8c8;
  transform: translateY(443px);
}

.selection {
  position: absolute;
  left: 435px;
  top: 54px;
  overflow: visible;
}

.titleblock {
  position: absolute;
  left: 44px;
  top: 259px;
  width: 935px;
  height: 150px;
  border: 3px solid #111;
  background: #111;
  display: grid;
  gap: 2px;
  grid-template-columns: 300px 174px 174px 74px 1fr;
  grid-template-rows: repeat(4, 1fr);
  font-family: "Liberation Sans", Arial, sans-serif;
  color: #111;
}

.tb {
  background: #fff;
  display: flex;
  align-items: center;
  justify-content: center;
  font-size: 19.8px;
  white-space: nowrap;
  padding-bottom: 2px;
}

.tb-title {
  grid-column: 1 / 4;
  grid-row: 1 / 3;
  font-size: 23.7px;
  font-weight: 700;
  padding-bottom: 3px;
}

.tb-date { grid-column: 4 / 6; grid-row: 1; }
.tb-a3 { grid-column: 4; grid-row: 2 / 4; }
.tb-no { grid-column: 5; grid-row: 2 / 4; }
.tb-lab { grid-column: 1; grid-row: 3 / 5; font-size: 23.8px; }
.tb-scale { grid-column: 2; grid-row: 3; justify-content: flex-start; padding-left: 7px; }
.tb-design { grid-column: 3; grid-row: 3; justify-content: flex-start; padding-left: 7px; font-size: 17.8px; }
.tb-check { grid-column: 2; grid-row: 4; justify-content: flex-start; padding: 0 0 0 7px; font-size: 18px; }
.tb-appr { grid-column: 3; grid-row: 4; justify-content: flex-start; padding: 0 0 0 7px; font-size: 17.8px; }
.tb-div { grid-column: 4 / 6; grid-row: 4; padding: 0; }

.sizepos {
  position: absolute;
  left: 1px;
  top: 466px;
  width: 299px;
  height: 233px;
  background: #ebebeb;
  border: 1px solid #b4b4b4;
  display: flex;
  font-size: 17.2px;
}

.sp-side {
  width: 50px;
  flex: none;
  display: flex;
  flex-direction: column;
  align-items: center;
  padding: 17px 4px 0 0;
  gap: 9px;
}

.sp-title {
  writing-mode: vertical-rl;
  font-size: 15.8px;
  font-weight: 700;
  color: #3955a3;
  white-space: nowrap;
  height: 143px;
  line-height: 18px;
  letter-spacing: -.2px;
}

.sp-table {
  width: 231px;
  margin-top: 18px;
}

.sp-row {
  height: 33px;
  display: flex;
  align-items: center;
  border-bottom: 1px solid #dcdcdc;
  white-space: nowrap;
}

.sp-row:last-child {
  border-bottom: 0;
}

.sp-row:last-child em {
  font-size: 16.6px;
}

.sp-row span {
  width: 74px;
  height: 100%;
  line-height: 33px;
  padding-left: 3px;
  border-right: 1px solid #d6d6d6;
  color: #555;
  flex: none;
}

.sp-row em {
  font-style: normal;
  font-size: 17.4px;
  padding-left: 4px;
  color: #222;
}

.hscroll {
  grid-column: 1 / 3;
  display: flex;
  padding-left: 2px;
  padding-right: 1px;
}

.hscroll .sbtn {
  height: 25px;
}

.htrack {
  flex: 1;
  background: #d9d9d9;
  padding-left: 509px;
}

.hthumb {
  width: 155px;
  height: 25px;
  background: #fff;
  border: 1px solid #bbb;
}

.pagebar {
  grid-column: 1 / 4;
  display: flex;
  align-items: center;
  padding-left: 22px;
  white-space: nowrap;
  margin-top: 1px;
  font-size: 17.5px;
}

.page-name {
  font-weight: 700;
  color: #3955a3;
  width: 82px;
}

.page-sep {
  width: 1px;
  height: 22px;
  background: #dedede;
}

.page-all {
  margin-left: 20px;
  color: #555;
}

.page-sep2 {
  margin: 0 18px 0 23px;
}

.caret-blue {
  width: 0;
  height: 0;
  margin-left: 8px;
  border-left: 6px solid transparent;
  border-right: 6px solid transparent;
  border-bottom: 7px solid #3955a3;
}

/* carets */
.caret-d {
  width: 0;
  height: 0;
  flex: none;
  border-left: 6px solid transparent;
  border-right: 6px solid transparent;
  border-top: 6px solid #444;
}

.caret-s {
  border-left-width: 4px;
  border-right-width: 4px;
  border-top-width: 4px;
  margin-top: -2px;
}

.caret-u {
  width: 0;
  height: 0;
  border-left: 7px solid transparent;
  border-right: 7px solid transparent;
  border-bottom: 6px solid #707070;
}

.caret-g {
  border-top-color: #707070;
}

.caret-l {
  width: 0;
  height: 0;
  border-top: 7px solid transparent;
  border-bottom: 7px solid transparent;
  border-right: 6px solid #707070;
}

.caret-r {
  width: 0;
  height: 0;
  flex: none;
  border-top: 5px solid transparent;
  border-bottom: 5px solid transparent;
  border-left: 6px solid #444;
}

.caret-r.caret-g {
  border-top: 7px solid transparent;
  border-bottom: 7px solid transparent;
  border-left-color: #707070;
}

/* format pane */
.format {
  flex: 1;
  background: #e8e8e8;
  border-left: 1px solid #d4d4d4;
  padding-left: 16px;
  overflow: hidden;
  white-space: nowrap;
  font-size: 17.5px;
}

.format-title {
  font-size: 30px;
  color: #2f4a9a;
  line-height: 40px;
  margin-top: 13px;
}

.format-icon {
  width: 60px;
  height: 44px;
  background: #a8a8a8;
  margin: 12px 0 0 3px;
}

.format-notch {
  display: block;
  margin-top: 10px;
}

.sect {
  display: flex;
  align-items: center;
  font-weight: 700;
  color: #3955a3;
  height: 24px;
  padding-left: 11px;
  gap: 10px;
}

.sect-fill {
  margin-top: 9px;
}

.sect-line {
  margin-top: 131px;
}

.tri {
  width: 0;
  height: 0;
  border-left: 11px solid transparent;
  border-bottom: 11px solid #444;
}

.radios {
  display: flex;
  flex-direction: column;
  gap: 19.4px;
  padding-left: 33px;
  margin-top: 25px;
}

.radios-line {
  margin-top: 26px;
}

.radio {
  width: 17px;
  height: 17px;
  border-radius: 50%;
  border: 1px solid #b4b4b4;
  background: #fff;
  flex: none;
  display: flex;
  align-items: center;
  justify-content: center;
}

.radio-on::after {
  content: "";
  width: 9px;
  height: 9px;
  border-radius: 50%;
  background: #6e6e6e;
}

/* status bar */
.status {
  height: 31px;
  flex: none;
  padding-top: 2px;
  background: #f3f2f1;
  border-top: 1px solid #c8c6c4;
  display: flex;
  align-items: center;
  font-size: 14.8px;
  color: #555;
  white-space: nowrap;
}

.st { flex: none; }
.st-page { margin-left: -17px; width: 101px; }
.st-w { width: 124px; }
.st-h { width: 128px; }
.st-a { width: 89px; }
.st-l { width: 183px; }

.st-present {
  margin-left: auto;
  margin-right: 2px;
}

/* red pen marks */
.ink {
  position: absolute;
  color: #e6101c;
  font-family: "Liberation Serif", serif;
  z-index: 5;
  line-height: 1;
}

.ink-1 {
  left: 966px;
  top: 92px;
  font-size: 42px;
}

.ink-2 {
  left: 298px;
  top: 1068px;
  font-size: 46px;
  font-style: italic;
  transform: scaleX(1.7);
  transform-origin: left;
}

.ink-3 {
  left: 865px;
  top: 163px;
  font-size: 50px;
  font-style: italic;
}
```
